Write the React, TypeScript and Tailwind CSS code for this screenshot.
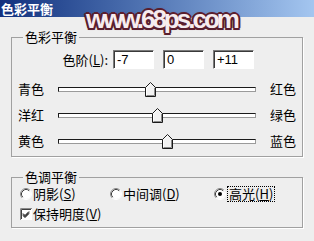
import React from "react";

const sliders = [
  { left: "青色", right: "红色", value: -7 },
  { left: "洋红", right: "绿色", value: 0 },
  { left: "黄色", right: "蓝色", value: 11 },
];

function Thumb() {
  return (
    <svg width="11" height="15" viewBox="0 0 11 15">
      <path d="M0.5 5.5 L5.5 0.5 L10.5 5.5 L10.5 14.5 L0.5 14.5 Z" fill="#f2f2f2" stroke="#1a1a1a" />
      <path d="M1.5 13.5 V5.9 L5.5 1.9" fill="none" stroke="#ffffff" />
      <path d="M9.5 5.9 V13.5 H1.5" fill="none" stroke="#8a8a8a" />
    </svg>
  );
}

function Radio({ checked }: { checked?: boolean }) {
  return (
    <svg width="12" height="12" viewBox="0 0 12 12" className="shrink-0">
      <circle cx="6" cy="6" r="5" fill="#ffffff" />
      <path d="M2.11 9.89 A5.5 5.5 0 0 1 9.89 2.11" fill="none" stroke="#8a8a8a" />
      <path d="M2.82 9.18 A4.5 4.5 0 0 1 9.18 2.82" fill="none" stroke="#404040" />
      <path d="M9.89 2.11 A5.5 5.5 0 0 1 2.11 9.89" fill="none" stroke="#ffffff" />
      {checked && <circle cx="6" cy="6" r="2" fill="#000000" />}
    </svg>
  );
}

function Checkbox() {
  return (
    <svg width="12" height="12" viewBox="0 0 12 12" className="shrink-0">
      <rect x="0" y="0" width="12" height="12" fill="#ffffff" />
      <path d="M0.5 12 V0.5 H12" fill="none" stroke="#8a8a8a" />
      <path d="M1.5 11 V1.5 H11" fill="none" stroke="#404040" />
      <path d="M3 5.5 L5 7.5 L9 3.5 M3 6.5 L5 8.5 L9 4.5 M3 7.5 L5 9.5 L9 5.5" fill="none" stroke="#000000" />
    </svg>
  );
}

function NumBox({ value }: { value: string }) {
  return (
    <div className="w-[41px] h-[19px] bg-white border border-t-[#7a7a7a] border-l-[#7a7a7a] border-r-white border-b-white shadow-[inset_1px_1px_0_#3a3a3a] pl-[3px] flex items-center font-['Liberation_Sans',sans-serif] text-[13px] leading-none">
      {value}
    </div>
  );
}

export default function App() {
  return (
    <div className="relative w-[314px] h-[241px] overflow-hidden bg-[#eeeeee] text-black font-['Noto_Sans_CJK_SC',sans-serif] text-[13px] leading-[14px]">
      <div className="h-[17px] bg-linear-to-r from-[#12307e] to-[#a4c6f0] flex items-center pl-[1px] text-white font-bold text-[13px] leading-none">
        色彩平衡
      </div>

      <div className="px-[11px] pt-[13px]">
        <fieldset className="w-[292px] border border-[#a0a0a0] shadow-[1px_1px_0_#ffffff]">
          <legend className="ml-[11px] px-[2px] leading-[14px]">色彩平衡</legend>
          <div className="pt-[6px] pb-[2px]">
            <div className="flex items-center">
              <div className="w-[96px] text-right leading-[14px]">
                色阶(<span className="underline">L</span>):
              </div>
              <div className="ml-[5px] flex gap-[9px]">
                <NumBox value="-7" />
                <NumBox value="0" />
                <NumBox value="+11" />
              </div>
            </div>
            <div className="mt-[7px] pl-[6px]">
              {sliders.map((s) => (
                <div key={s.left} className="h-[26px] flex items-center">
                  <div className="w-[40px] leading-[14px]">{s.left}</div>
                  <div className="relative w-[198px] h-[5px] bg-white border border-t-[#1a1a1a] border-l-[#1a1a1a] border-r-[#9a9a9a] border-b-[#9a9a9a]">
                    <div className="absolute top-[-6px] leading-none" style={{ left: Math.round(92.5 + s.value * 0.99) }}>
                      <Thumb />
                    </div>
                  </div>
                  <div className="ml-[14px] leading-[14px]">{s.right}</div>
                </div>
              ))}
            </div>
          </div>
        </fieldset>

        <fieldset className="mt-[13px] w-[292px] border border-[#a0a0a0] shadow-[1px_1px_0_#ffffff]">
          <legend className="ml-[11px] px-[2px] leading-[14px]">色调平衡</legend>
          <div className="pl-[8px] pt-[2px] pb-[5px]">
            <div className="h-[16px] flex items-center">
              <div className="w-[90px] flex items-center gap-[1px]">
                <Radio />
                <span>
                  阴影(<span className="underline">S</span>)
                </span>
              </div>
              <div className="w-[104px] flex items-center gap-[1px]">
                <Radio />
                <span>
                  中间调(<span className="underline">D</span>)
                </span>
              </div>
              <div className="flex items-center gap-[2px]">
                <Radio checked />
                <span className="outline outline-1 outline-dotted outline-black px-[1px]">
                  高光(<span className="underline">H</span>)
                </span>
              </div>
            </div>
            <div className="mt-[4px] h-[16px] flex items-center gap-[1px]">
              <Checkbox />
              <span>
                保持明度(<span className="underline">V</span>)
              </span>
            </div>
          </div>
        </fieldset>
      </div>

      <div className="absolute left-[86px] top-[6px] font-['Liberation_Sans',sans-serif] font-bold text-[26px] leading-[26px] tracking-[-3px] text-[#f6ecef] [text-shadow:2px_0_0_#5a1e2e,-2px_0_0_#5a1e2e,0_2px_0_#5a1e2e,0_-2px_0_#5a1e2e,1.5px_1.5px_0_#5a1e2e,-1.5px_1.5px_0_#5a1e2e,1.5px_-1.5px_0_#5a1e2e,-1.5px_-1.5px_0_#5a1e2e,0_0_3px_#5a1e2e]">
        www.68ps.com
      </div>
    </div>
  );
}
